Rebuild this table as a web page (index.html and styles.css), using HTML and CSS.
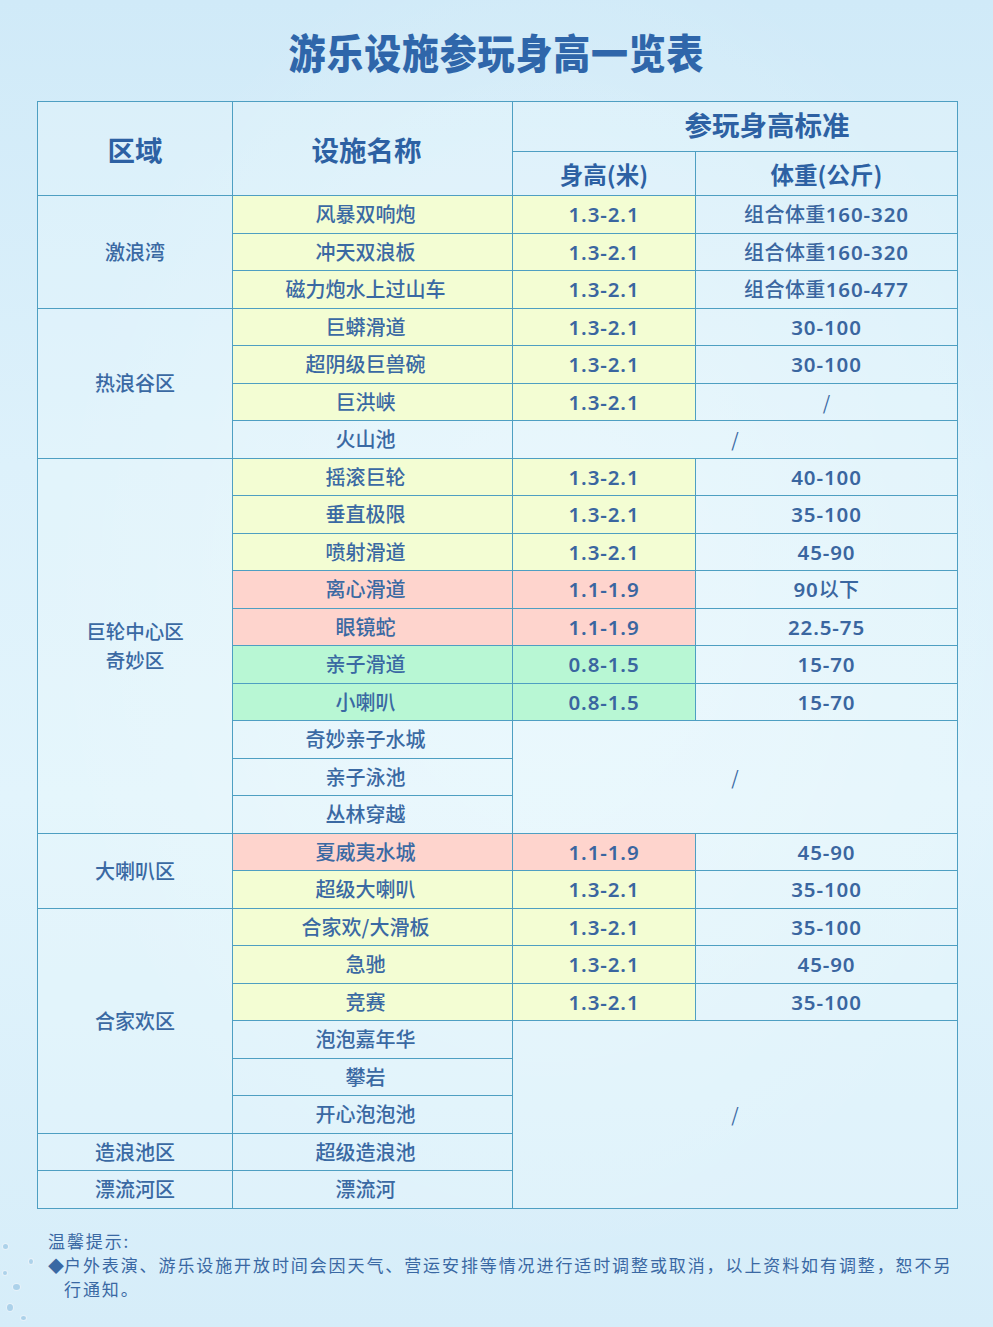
FILE: index.html
```html
<!DOCTYPE html>
<html lang="zh-CN">
<head>
<meta charset="utf-8">
<title>游乐设施参玩身高一览表</title>
<link rel="stylesheet" href="styles.css">
</head>
<body>
<div class="page">
  <div class="drops">
    <span class="d d1"></span><span class="d d2"></span><span class="d d3"></span><span class="d d4"></span><span class="d d5"></span><span class="d d6"></span>
  </div>
  <h1 class="title">游乐设施参玩身高一览表</h1>
  <table class="sheet">
    <colgroup>
      <col class="c-zone"><col class="c-name"><col class="c-h"><col class="c-w">
    </colgroup>
    <thead>
      <tr class="hr1">
        <th rowspan="2" class="th-big">区域</th>
        <th rowspan="2" class="th-big th-name">设施名称</th>
        <th colspan="2" class="th-big th-std">参玩身高标准</th>
      </tr>
      <tr class="hr2">
        <th class="th-sub">身高(米)</th>
        <th class="th-sub">体重(公斤)</th>
      </tr>
    </thead>
    <tbody>
      <tr><td rowspan="3" class="zone">激浪湾</td><td class="nm y">风暴双响炮</td><td class="y num">1.3-2.1</td><td class="num"><span class="cj">组合体重</span>160-320</td></tr>
      <tr><td class="nm y">冲天双浪板</td><td class="y num">1.3-2.1</td><td class="num"><span class="cj">组合体重</span>160-320</td></tr>
      <tr><td class="nm y">磁力炮水上过山车</td><td class="y num">1.3-2.1</td><td class="num"><span class="cj">组合体重</span>160-477</td></tr>

      <tr><td rowspan="4" class="zone">热浪谷区</td><td class="nm y">巨蟒滑道</td><td class="y num">1.3-2.1</td><td class="num">30-100</td></tr>
      <tr><td class="nm y">超阴级巨兽碗</td><td class="y num">1.3-2.1</td><td class="num">30-100</td></tr>
      <tr><td class="nm y">巨洪峡</td><td class="y num">1.3-2.1</td><td class="slash">/</td></tr>
      <tr><td class="nm">火山池</td><td colspan="2" class="slash">/</td></tr>

      <tr><td rowspan="10" class="zone"><span class="zl">巨轮中心区</span><span class="zl">奇妙区</span></td><td class="nm y">摇滚巨轮</td><td class="y num">1.3-2.1</td><td class="num">40-100</td></tr>
      <tr><td class="nm y">垂直极限</td><td class="y num">1.3-2.1</td><td class="num">35-100</td></tr>
      <tr><td class="nm y">喷射滑道</td><td class="y num">1.3-2.1</td><td class="num">45-90</td></tr>
      <tr><td class="nm p">离心滑道</td><td class="p num">1.1-1.9</td><td class="num">90<span class="cj">以下</span></td></tr>
      <tr><td class="nm p">眼镜蛇</td><td class="p num">1.1-1.9</td><td class="num">22.5-75</td></tr>
      <tr><td class="nm g">亲子滑道</td><td class="g num">0.8-1.5</td><td class="num">15-70</td></tr>
      <tr><td class="nm g">小喇叭</td><td class="g num">0.8-1.5</td><td class="num">15-70</td></tr>
      <tr><td class="nm">奇妙亲子水城</td><td rowspan="3" colspan="2" class="slash">/</td></tr>
      <tr><td class="nm">亲子泳池</td></tr>
      <tr><td class="nm">丛林穿越</td></tr>

      <tr><td rowspan="2" class="zone">大喇叭区</td><td class="nm p">夏威夷水城</td><td class="p num">1.1-1.9</td><td class="num">45-90</td></tr>
      <tr><td class="nm y">超级大喇叭</td><td class="y num">1.3-2.1</td><td class="num">35-100</td></tr>

      <tr><td rowspan="6" class="zone">合家欢区</td><td class="nm y">合家欢/大滑板</td><td class="y num">1.3-2.1</td><td class="num">35-100</td></tr>
      <tr><td class="nm y">急驰</td><td class="y num">1.3-2.1</td><td class="num">45-90</td></tr>
      <tr><td class="nm y">竞赛</td><td class="y num">1.3-2.1</td><td class="num">35-100</td></tr>
      <tr><td class="nm">泡泡嘉年华</td><td rowspan="5" colspan="2" class="slash">/</td></tr>
      <tr><td class="nm">攀岩</td></tr>
      <tr><td class="nm">开心泡泡池</td></tr>
      <tr><td class="zone">造浪池区</td><td class="nm">超级造浪池</td></tr>
      <tr><td class="zone">漂流河区</td><td class="nm">漂流河</td></tr>
    </tbody>
  </table>
  <div class="notes">
    <p class="note-title">温馨提示:</p>
    <p class="note-item"><span class="bullet">◆</span>户外表演、游乐设施开放时间会因天气、营运安排等情况进行适时调整或取消，以上资料如有调整，恕不另行通知。</p>
  </div>
</div>
</body>
</html>
```

FILE: styles.css
```css
html, body {
  margin: 0;
  padding: 0;
}
body {
  width: 993px;
  height: 1327px;
  overflow: hidden;
  background: linear-gradient(180deg, #d0eaf8 0%, #ddf1fb 35%, #e2f4fc 60%, #d6edf9 100%);
  font-family: "Noto Sans CJK SC", "Noto Sans", sans-serif;
  color: #3767a2;
}
.page {
  position: relative;
  width: 993px;
  height: 1327px;
  background: radial-gradient(ellipse at 55% 45%, rgba(255,255,255,0.35), rgba(255,255,255,0) 65%);
}
.title {
  margin: 0;
  padding-top: 26px;
  height: 72px;
  box-sizing: border-box;
  text-align: center;
  font-size: 37px;
  line-height: 48px;
  font-weight: 900;
  letter-spacing: 0.8px;
  color: #2f66aa;
  transform: scaleY(1.1);
}
.sheet {
  margin: 29px 0 0 37px;
  width: 920px;
  border-collapse: collapse;
  table-layout: fixed;
  background: rgba(235, 248, 253, 0.35);
}
.c-zone { width: 195px; }
.c-name { width: 280px; }
.c-h { width: 183px; }
.c-w { width: 262px; }
.sheet th, .sheet td {
  border: 1px solid #4e9fc2;
  padding: 0;
  text-align: center;
  vertical-align: middle;
}
.sheet th {
  color: #2d61a3;
  font-weight: 700;
}
.hr1 { height: 50px; }
.hr2 { height: 44px; }
.th-big {
  font-size: 27.5px;
  line-height: 32px;
}
.sheet th.th-name {
  padding-right: 12px;
}
.sheet th.th-std {
  padding-left: 64px;
  padding-bottom: 6px;
}
.th-sub {
  font-size: 23.5px;
  line-height: 30px;
  padding-top: 4px;
}
.sheet tbody tr {
  height: 37.5px;
}
.sheet td {
  font-size: 20px;
  line-height: 24px;
  font-weight: 500;
  color: #3a69a3;
}
.sheet td.nm {
  padding-right: 14px;
}
.sheet td.zone {
  font-size: 20px;
  line-height: 24px;
}
.sheet td.zone .zl {
  display: block;
  font-size: 19.5px;
  line-height: 28.5px;
}
.sheet td.num {
  font-family: "Noto Sans", "Noto Sans CJK SC", sans-serif;
  font-weight: 600;
  font-size: 20.5px;
  letter-spacing: 0.9px;
  color: #3a66a0;
}
.cj {
  font-family: "Noto Sans CJK SC", sans-serif;
  font-weight: 500;
  font-size: 20px;
  letter-spacing: 0.4px;
}
.sheet td.slash {
  font-size: 19px;
  font-weight: 400;
}
.y { background: #f3fdd3; }
.p { background: #fed4cd; }
.g { background: #b8f7d4; }

.notes {
  margin: 20px 0 0 48px;
  width: 910px;
  font-size: 17px;
  line-height: 24px;
  color: #3a68a3;
  letter-spacing: 1.9px;
}
.notes p {
  margin: 0;
}
.note-item {
  padding-left: 16px;
  text-indent: -16px;
}
.bullet {
  display: inline-block;
  width: 16px;
  text-indent: 0;
  letter-spacing: 0;
  font-size: 16px;
}
.drops {
  position: absolute;
  left: 0;
  top: 1225px;
  width: 60px;
  height: 102px;
}
.d {
  position: absolute;
  border-radius: 50%;
  background: rgba(120, 175, 215, 0.45);
  border: 1px solid rgba(255,255,255,0.7);
}
.d1 { left: 2px; top: 18px; width: 5px; height: 5px; }
.d2 { left: 12px; top: 58px; width: 7px; height: 6px; }
.d3 { left: 28px; top: 33px; width: 4px; height: 5px; }
.d4 { left: 6px; top: 78px; width: 6px; height: 7px; }
.d5 { left: 20px; top: 90px; width: 5px; height: 4px; }
.d6 { left: 2px; top: 45px; width: 4px; height: 4px; }
```
